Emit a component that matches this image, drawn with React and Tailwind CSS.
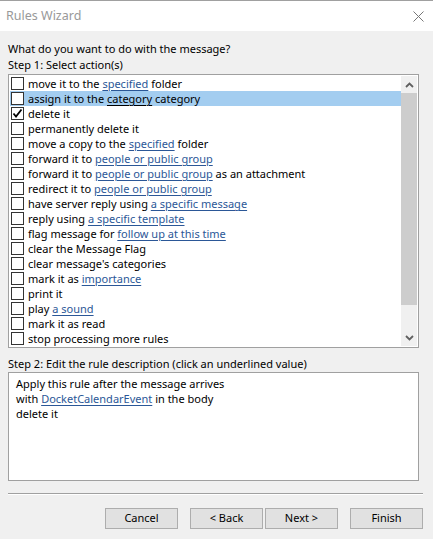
const font = { fontFamily: '"Noto Sans", "Open Sans", sans-serif' };

const rows = [
  ["move it to the ", { link: "specified" }, " folder"],
  ["assign it to the ", { link: "category", dark: true }, " category"],
  ["delete it"],
  ["permanently delete it"],
  ["move a copy to the ", { link: "specified" }, " folder"],
  ["forward it to ", { link: "people or public group" }],
  ["forward it to ", { link: "people or public group" }, " as an attachment"],
  ["redirect it to ", { link: "people or public group" }],
  ["have server reply using ", { link: "a specific message" }],
  ["reply using ", { link: "a specific template" }],
  ["flag message for ", { link: "follow up at this time" }],
  ["clear the Message Flag"],
  ["clear message's categories"],
  ["mark it as ", { link: "importance" }],
  ["print it"],
  ["play ", { link: "a sound" }],
  ["mark it as read"],
  ["stop processing more rules"],
];

function Parts({ parts }) {
  return parts.map((p, i) =>
    typeof p === "string" ? (
      <span key={i}>{p}</span>
    ) : (
      <span
        key={i}
        className={
          p.dark
            ? "underline decoration-1 underline-offset-2 text-black"
            : "underline decoration-1 underline-offset-2 text-[#2b5797]"
        }
      >
        {p.link}
      </span>
    )
  );
}

function Checkbox({ checked }) {
  return (
    <div className="flex h-[13px] w-[13px] shrink-0 items-center justify-center border border-[#333] bg-white">
      {checked && (
        <svg width="11" height="11" viewBox="0 0 11 11">
          <path d="M1.5 5.5 L4 8.5 L9.5 1.5" fill="none" stroke="#000" strokeWidth="1.8" />
        </svg>
      )}
    </div>
  );
}

function Button({ children }) {
  return (
    <div className="flex h-[21px] w-[73px] items-center justify-center border border-[#adadad] bg-[#e1e1e1] text-[11px] text-black">
      {children}
    </div>
  );
}

export default function App() {
  return (
    <div className="flex h-[539px] w-[433px] flex-col bg-[#f0f0f0] text-[11px] text-black" style={font}>
      <div className="flex h-[31px] shrink-0 items-center justify-between border-t border-[#a0a0a0] bg-white pl-[6px] pr-[9px]">
        <span className="text-[12.5px] text-[#999]">Rules Wizard</span>
        <svg width="11" height="11" viewBox="0 0 11 11">
          <path d="M0.5 0.5 L10.5 10.5 M10.5 0.5 L0.5 10.5" stroke="#777" strokeWidth="1" />
        </svg>
      </div>

      <div className="flex flex-1 flex-col pl-2 pr-[10px] pt-[10px]">
        <div className="leading-[16px]">What do you want to do with the message?</div>
        <div className="leading-[16px]">Step 1: Select action(s)</div>

        <div className="mt-px flex h-[274px] w-[411px] border border-[#a0a0a0] bg-white p-px">
          <div className="flex flex-1 flex-col">
            {rows.map((parts, i) => (
              <div
                key={i}
                className={
                  i === 1
                    ? "flex h-[15px] items-center gap-[4px] bg-[#a3cdf0] pl-px leading-[15px]"
                    : "flex h-[15px] items-center gap-[4px] pl-px leading-[15px]"
                }
              >
                <Checkbox checked={i === 2} />
                <span className="whitespace-nowrap">
                  <Parts parts={parts} />
                </span>
              </div>
            ))}
          </div>
          <div className="flex w-[16px] flex-col bg-[#f0f0f0]">
            <div className="flex h-[17px] items-center justify-center">
              <svg width="9" height="6" viewBox="0 0 9 6">
                <path d="M1 5 L4.5 1.5 L8 5" fill="none" stroke="#606060" strokeWidth="1.8" />
              </svg>
            </div>
            <div className="h-[212px] bg-[#cdcdcd]" />
            <div className="flex-1" />
            <div className="flex h-[17px] items-center justify-center">
              <svg width="9" height="6" viewBox="0 0 9 6">
                <path d="M1 1 L4.5 4.5 L8 1" fill="none" stroke="#606060" strokeWidth="1.8" />
              </svg>
            </div>
          </div>
        </div>

        <div className="mt-2 leading-[16px]">Step 2: Edit the rule description (click an underlined value)</div>
        <div className="h-[109px] w-[411px] border border-[#a0a0a0] bg-white pl-[7px] pt-[3px] leading-[15px]">
          <div>Apply this rule after the message arrives</div>
          <div>
            with{" "}
            <span className="underline decoration-1 underline-offset-2 text-[#2b5797]">DocketCalendarEvent</span> in
            the body
          </div>
          <div>delete it</div>
        </div>

        <div className="mt-[12px] border-t border-b border-t-[#a0a0a0] border-b-white" />

        <div className="mt-[13px] flex justify-end">
          <div className="flex items-center">
            <Button>Cancel</Button>
            <div className="ml-[12px] flex gap-[2px]">
              <Button>&lt; Back</Button>
              <Button>Next &gt;</Button>
            </div>
            <div className="ml-[12px]">
              <Button>Finish</Button>
            </div>
          </div>
        </div>
      </div>
    </div>
  );
}
